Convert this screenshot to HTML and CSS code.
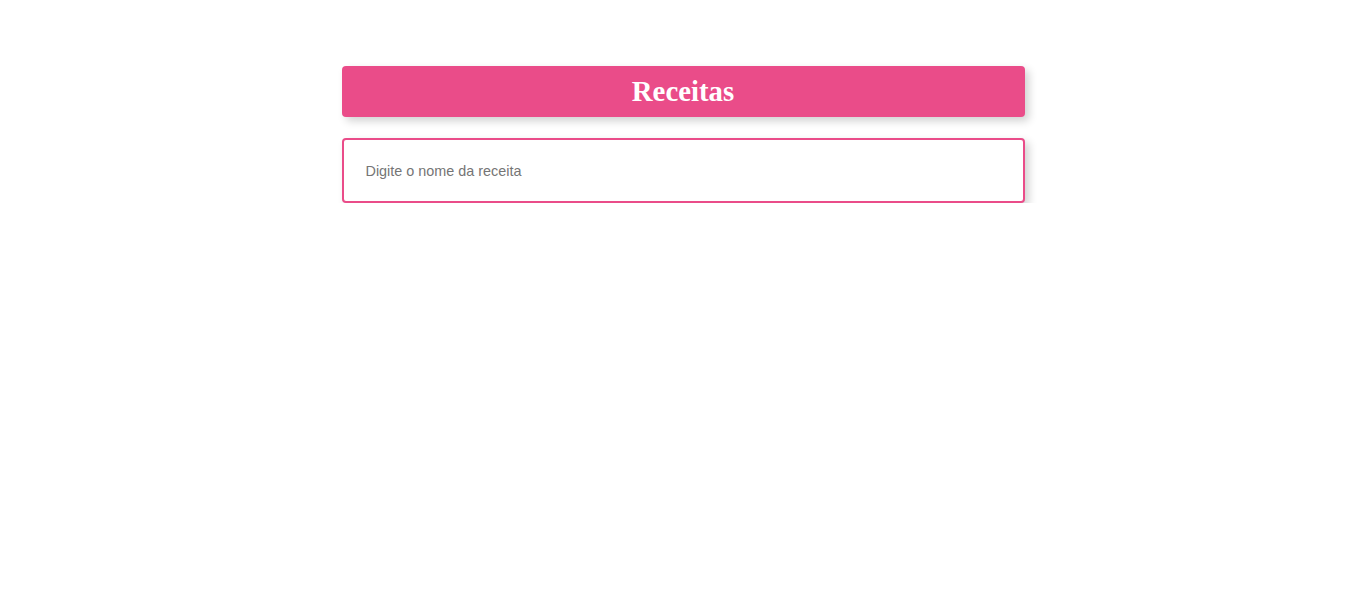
FILE: index.html
```html
<!DOCTYPE html>
<html lang="pt-BR">
<head>
<meta charset="utf-8">
<title>Receitas</title>
<link rel="stylesheet" href="styles.css">
</head>
<body>
<main class="app">
  <header class="title-bar">
    <h1 class="title">Receitas</h1>
  </header>
  <input class="search" type="text" placeholder="Digite o nome da receita">
</main>
</body>
</html>
```

FILE: styles.css
```css
html, body {
  margin: 0;
  padding: 0;
  background: #ffffff;
}

.app {
  width: 683px;
  margin: 66px auto 0;
  padding-left: 2px;
  display: flex;
  flex-direction: column;
  gap: 21px;
}

.title-bar {
  height: 51px;
  background: #ea4c89;
  border-radius: 4px;
  box-shadow: 4px 4px 8px rgba(0, 0, 0, 0.18);
  display: flex;
  align-items: center;
  justify-content: center;
}

.title {
  margin: 0;
  color: #ffffff;
  font-family: "Liberation Serif", "Times New Roman", serif;
  font-weight: bold;
  font-size: 28.8px;
  line-height: 1;
}

.search {
  box-sizing: border-box;
  height: 65px;
  width: 100%;
  margin: 0;
  border: 2px solid #ea4c89;
  border-radius: 4px;
  padding: 0 22px;
  font-family: "Liberation Sans", Arial, sans-serif;
  font-size: 14.4px;
  color: #333333;
  background: #ffffff;
  box-shadow: 4px 4px 8px rgba(0, 0, 0, 0.18);
  outline: none;
}

.search::placeholder {
  color: #757575;
}
```
